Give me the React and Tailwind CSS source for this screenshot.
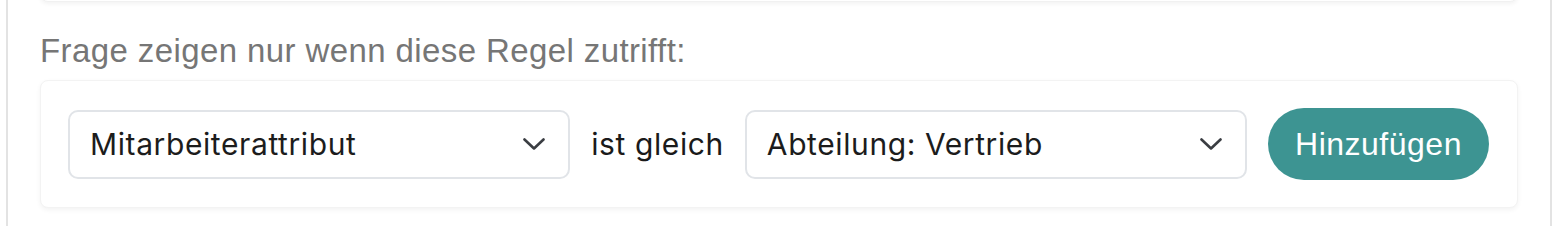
const labelFont = { fontFamily: '"Liberation Sans", Arial, sans-serif' };
const fieldFont = { fontFamily: 'Inter, "Noto Sans", sans-serif' };

function Chevron() {
  return (
    <svg width="22" height="12" viewBox="0 0 22 12" fill="none" className="shrink-0">
      <path d="M1.5 1.5 11 10.5l9.5-9" stroke="#3a3d42" strokeWidth="2.6" strokeLinecap="round" strokeLinejoin="round" />
    </svg>
  );
}

function Select({ value }) {
  return (
    <div className="flex-1 h-[69px] flex items-center justify-between rounded-[10px] border-2 border-[#e1e4e8] bg-white pl-[20px] pr-[23px]">
      <span className="text-[30px] text-[#1c1c1c] tracking-[0.6px]" style={fieldFont}>{value}</span>
      <Chevron />
    </div>
  );
}

export default function App() {
  return (
    <div className="w-[1558px] h-[226px] bg-white overflow-hidden">
      <div className="mx-[6px] h-full flex flex-col border-x-2 border-[#e3e3e3] px-8">
        {/* vorherige Karte, nur der untere Rand sichtbar */}
        <div className="-mt-[38px] h-[40px] shrink-0 rounded-lg bg-white border border-[#f1f1f1] shadow-[0_2px_4px_rgba(0,0,0,0.05)]" />

        <p className="mt-[29px] text-[33px] leading-[40px] text-[#767676] tracking-[0.4px]" style={labelFont}>
          Frage zeigen nur wenn diese Regel zutrifft:
        </p>

        {/* Regel-Zeile */}
        <div className="mt-[9px] h-[128px] shrink-0 rounded-lg bg-white border border-[#f3f3f3] shadow-[0_2px_5px_rgba(0,0,0,0.05)] flex items-center gap-[21px] pl-[27px] pr-[28px]">
          <Select value="Mitarbeiterattribut" />
          <span className="text-[30px] text-[#1a1a1a] tracking-[0.6px]" style={fieldFont}>ist gleich</span>
          <Select value="Abteilung: Vertrieb" />
          <button
            className="w-[221px] h-[72px] shrink-0 rounded-full bg-[#3d9492] text-white text-[32px] tracking-[0.5px]"
            style={labelFont}
          >
            Hinzufügen
          </button>
        </div>
      </div>
    </div>
  );
}
